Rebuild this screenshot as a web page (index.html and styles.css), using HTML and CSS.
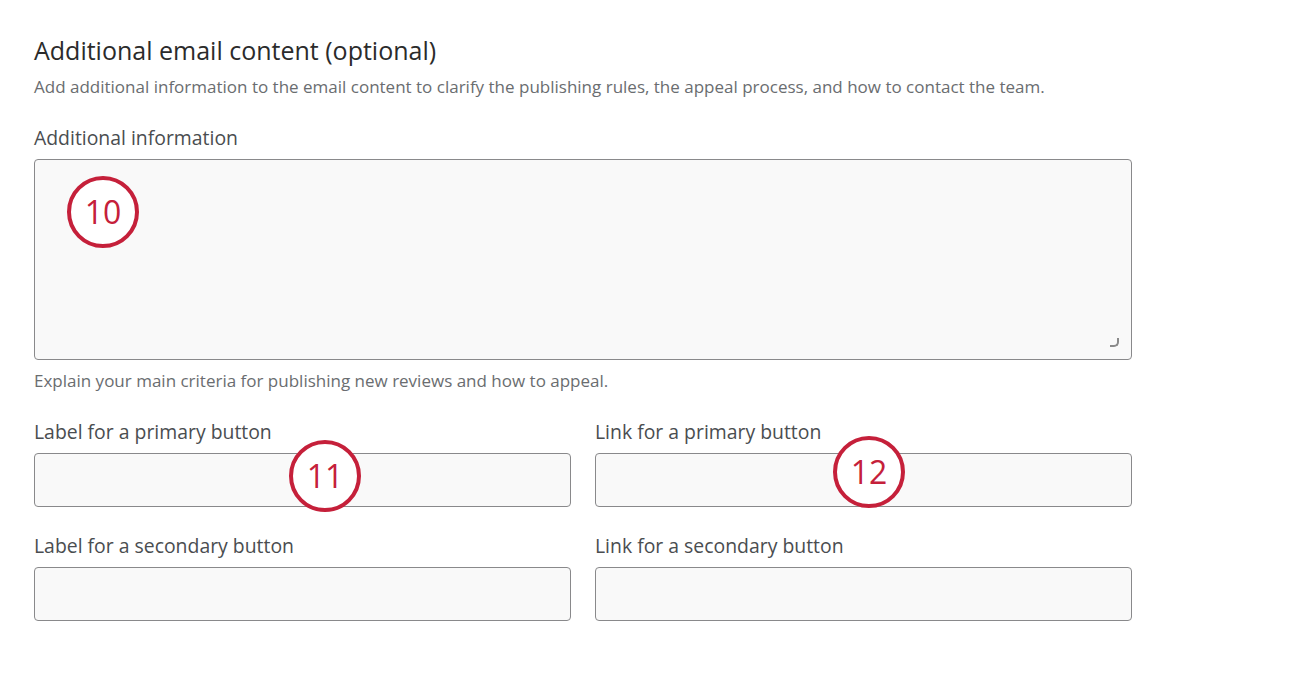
FILE: index.html
```html
<!DOCTYPE html>
<html lang="en">
<head>
<meta charset="utf-8">
<title>Additional email content</title>
<link rel="stylesheet" href="styles.css">
</head>
<body>
<main class="page">
  <section class="section">
    <h2 class="title">Additional email content (optional)</h2>
    <p class="desc">Add additional information to the email content to clarify the publishing rules, the appeal process, and how to contact the team.</p>

    <div class="field">
      <label class="label">Additional information</label>
      <div class="textarea-wrap">
        <div class="textarea"></div>
        <span class="badge badge-10">10</span>
      </div>
      <p class="help">Explain your main criteria for publishing new reviews and how to appeal.</p>
    </div>

    <div class="grid">
      <div class="field">
        <label class="label">Label for a primary button</label>
        <div class="input-wrap">
          <div class="input"></div>
          <span class="badge badge-11">11</span>
        </div>
      </div>
      <div class="field">
        <label class="label">Link for a primary button</label>
        <div class="input-wrap">
          <div class="input"></div>
          <span class="badge badge-12">12</span>
        </div>
      </div>
      <div class="field">
        <label class="label">Label for a secondary button</label>
        <div class="input-wrap">
          <div class="input"></div>
        </div>
      </div>
      <div class="field">
        <label class="label">Link for a secondary button</label>
        <div class="input-wrap">
          <div class="input"></div>
        </div>
      </div>
    </div>
  </section>
</main>
</body>
</html>
```

FILE: styles.css
```css
* { box-sizing: border-box; }
html, body { margin: 0; padding: 0; background: #ffffff; }
body {
  font-family: "Open Sans", "Noto Sans", "Liberation Sans", sans-serif;
  color: #32363a;
}
.page {
  padding: 35px 0 0 34px;
  width: 1132px;
}
.title {
  margin: 0;
  font-size: 25px;
  line-height: 30px;
  font-weight: 400;
  color: #2b2b2b;
}
.desc {
  margin: 11px 0 0;
  font-size: 17px;
  line-height: 22px;
  color: #6a6d70;
  white-space: nowrap;
}
.field { display: flex; flex-direction: column; }
.section > .field { margin-top: 28px; }
.label {
  font-size: 19.4px;
  line-height: 24px;
  color: #4a4d50;
  margin-bottom: 9px;
}
.textarea-wrap, .input-wrap { position: relative; }
.textarea {
  height: 201px;
  border: 1px solid #89898b;
  border-radius: 4px;
  background: #f9f9f9;
  position: relative;
}
.textarea::after {
  content: "";
  position: absolute;
  right: 12px;
  bottom: 12px;
  width: 7px;
  height: 7px;
  border-right: 2px solid #8a8a8a;
  border-bottom: 2px solid #8a8a8a;
  border-bottom-right-radius: 5px;
}
.help {
  margin: 10px 0 0;
  font-size: 17px;
  line-height: 22px;
  color: #6a6d70;
}
.grid {
  margin-top: 28px;
  display: grid;
  grid-template-columns: 537px 537px;
  column-gap: 24px;
  row-gap: 27px;
}
.input {
  height: 54px;
  border: 1px solid #89898b;
  border-radius: 4px;
  background: #f9f9f9;
}
.badge {
  position: absolute;
  width: 72px;
  height: 72px;
  border: 4px solid #c5203a;
  border-radius: 50%;
  background: #ffffff;
  color: #c5203a;
  font-size: 32px;
  line-height: 64px;
  text-align: center;
}
.badge-10 { left: 33px; top: 17px; }
.badge-11 { left: 255px; top: -13px; }
.badge-12 { left: 238px; top: -17px; }
```
